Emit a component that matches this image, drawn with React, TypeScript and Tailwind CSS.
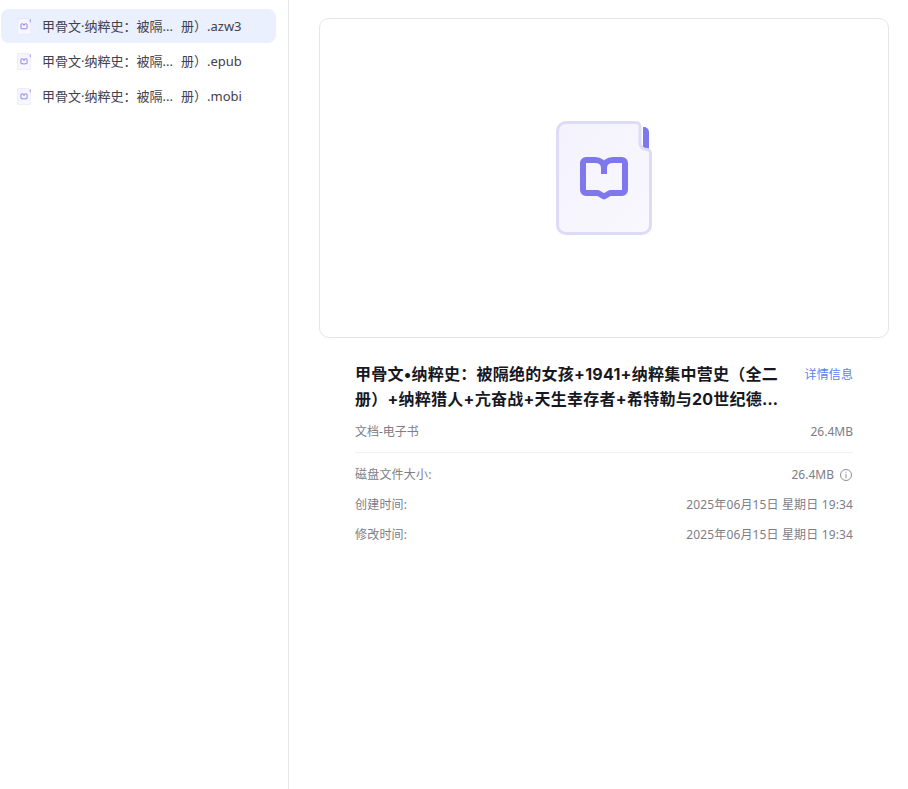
const fontStack = "font-['Noto_Sans','Noto_Sans_CJK_SC',sans-serif]";

const files = [
  { ext: '.azw3', active: true },
  { ext: '.epub', active: false },
  { ext: '.mobi', active: false },
];

const details = [
  { label: '磁盘文件大小:', value: '26.4MB', info: true },
  { label: '创建时间:', value: '2025年06月15日 星期日 19:34', info: false },
  { label: '修改时间:', value: '2025年06月15日 星期日 19:34', info: false },
];

// 电子书文件图标
function BookFileIcon({ className }: { className: string }) {
  return (
    <svg viewBox="0 0 96 114" fill="none" className={className}>
      <defs>
        <linearGradient id="page" x1="0" y1="0" x2="1" y2="1">
          <stop offset="0" stopColor="#f4f2fb" />
          <stop offset="1" stopColor="#f9f8fe" />
        </linearGradient>
      </defs>
      <path d="M87 6h1a5 5 0 0 1 5 5v17a1 1 0 0 1-1 1h-3a3 3 0 0 1-2-3V6z" fill="#7f78ec" />
      <path
        d="M10 1.500H80a4 4 0 0 1 4 4V21a7 7 0 0 0 4 7l3 .4a4 4 0 0 1 3.500 4V104a8.500 8.500 0 0 1-8.500 8.500H10A8.500 8.500 0 0 1 1.500 104V10A8.500 8.500 0 0 1 10 1.500z"
        fill="url(#page)"
        stroke="#dedbf8"
        strokeWidth="3"
      />
      <path
        d="M30 39h9c5 0 9 3 9 8 0-5 4-8 9-8h9a3 3 0 0 1 3 3v27a3 3 0 0 1-3 3H54l-6 3.500-6-3.500H30a3 3 0 0 1-3-3V42a3 3 0 0 1 3-3z"
        stroke="#7f78ec"
        strokeWidth="6"
        strokeLinejoin="round"
      />
      <path d="M48 45v8" stroke="#7f78ec" strokeWidth="6" />
    </svg>
  );
}

export default function App() {
  return (
    <div className={`flex h-[789px] w-[908px] overflow-hidden bg-white ${fontStack}`}>
      {/* 左侧文件列表 */}
      <aside className="h-full w-[289px] shrink-0 border-r border-[#e8e8ec] pl-px pr-3 pt-[9px]">
        {files.map((file) => (
          <div
            key={file.ext}
            className={`mb-px flex h-[34px] w-[275px] items-center rounded-lg pl-4 pt-[2px] text-[13px] text-[#41414e] ${
              file.active ? 'bg-[#eaf0fe]' : ''
            }`}
          >
            <BookFileIcon className="-mt-[2px] h-[17px] w-[14px] shrink-0" />
            <span className="ml-[11px] w-[139px] whitespace-nowrap">甲骨文·纳粹史：被隔...</span>
            <span className="whitespace-nowrap">册）{file.ext}</span>
          </div>
        ))}
      </aside>

      {/* 右侧预览 */}
      <main className="flex-1 pl-[30px] pt-[18px]">
        <div className="flex h-[320px] w-[570px] items-center justify-center rounded-[10px] border border-[#e6e6ea]">
          <BookFileIcon className="h-[114px] w-[96px]" />
        </div>

        <div className="ml-9 w-[498px]">
          <div className="mt-[24px] flex items-start justify-between">
            <h1 className="h-[50px] w-[430px] font-['Inter','Noto_Sans_CJK_SC',sans-serif] text-base font-bold leading-[25px] tracking-[0.25px] text-[#17171f]">
              甲骨文•纳粹史：被隔绝的女孩+1941+纳粹集中营史（全二册）+纳粹猎人+亢奋战+天生幸存者+希特勒与20世纪德…
            </h1>
            <a className="mt-[4px] text-xs leading-[18px] tracking-[0.1px] text-[#5b80f8]">详情信息</a>
          </div>

          <div className="mt-[11px] flex justify-between border-b border-[#f1f1f3] pb-[11px] text-xs leading-[18px] text-[#7d7d88]">
            <span>文档-电子书</span>
            <span>26.4MB</span>
          </div>

          <div className="mt-[7px]">
            {details.map((row) => (
              <div key={row.label} className="flex h-[30px] items-center justify-between text-xs text-[#7d7d88]">
                <span className="tracking-[0.2px]">{row.label}</span>
                <span className={`flex items-center gap-[5px] ${row.info ? '' : 'tracking-[0.14px]'}`}>
                  {row.value}
                  {row.info && (
                    <svg viewBox="0 0 14 14" fill="none" stroke="#8e8e98" className="h-[14px] w-[14px]">
                      <circle cx="7" cy="7" r="5.500" />
                      <path d="M7 6v4.200M7 3.800v1" />
                    </svg>
                  )}
                </span>
              </div>
            ))}
          </div>
        </div>
      </main>
    </div>
  );
}
